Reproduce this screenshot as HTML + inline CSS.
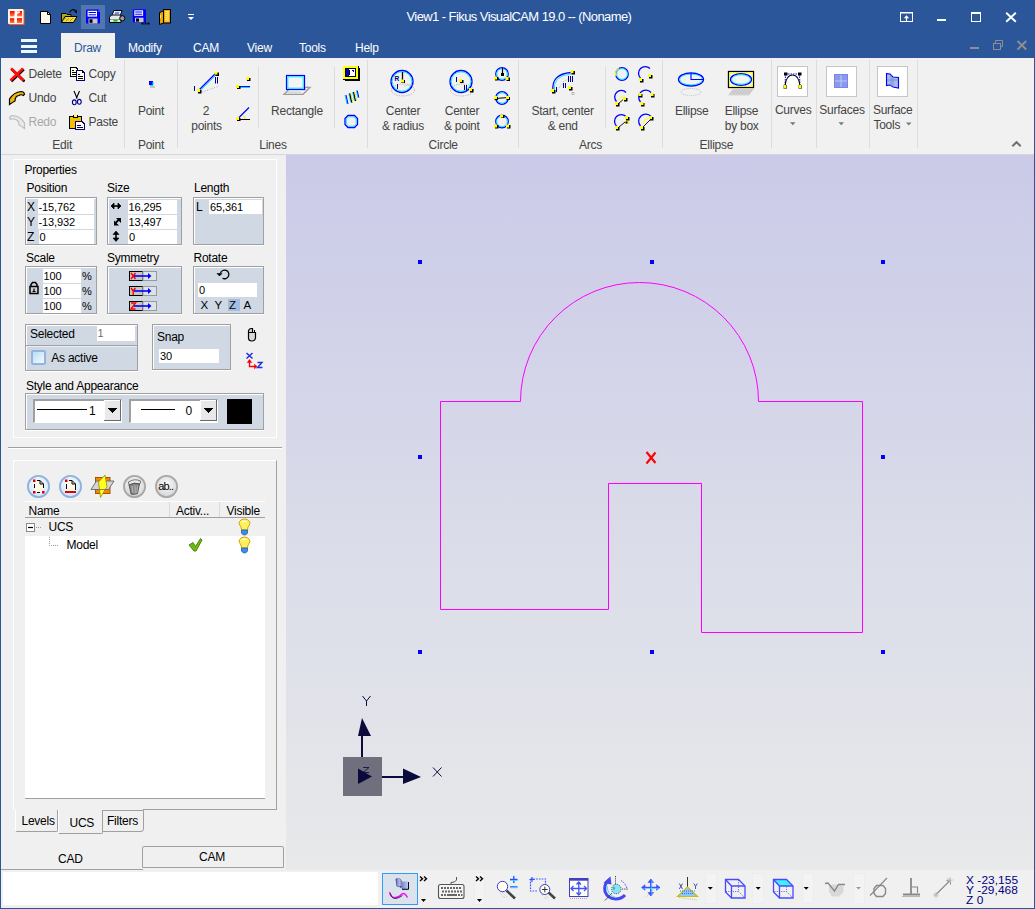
<!DOCTYPE html>
<html><head><meta charset="utf-8">
<style>
*{box-sizing:border-box;margin:0;padding:0}
html,body{width:1035px;height:909px;overflow:hidden;background:#f0f0f0;font-family:"Liberation Sans",sans-serif;font-size:12px;color:#222}
.a{position:absolute}
.t{position:absolute;white-space:nowrap;letter-spacing:-0.25px;line-height:14px}
#title{left:0;top:0;width:1035px;height:58px;background:#2b579a}
#ribbon{left:1px;top:58px;width:1033px;height:97px;background:#f1f1f1;border-bottom:1px solid #d6d6d6}
.rt{color:#444}
.sep{position:absolute;width:1px;background:#dcdcdc}
#left{left:1px;top:155px;width:285px;height:715px;background:#f0f0f0}
#vp{left:286px;top:155px;width:748px;height:715px;background:linear-gradient(#cacae8 0%,#d9dbe9 50%,#e8e9ea 100%)}
#status{left:1px;top:870px;width:1033px;height:38px;background:#f0f0f0}
.box{position:absolute;border:1px solid #a5a5a5;background:#cfd8e2}
.inp{position:absolute;background:#fff}
.nt{position:absolute;white-space:nowrap;font-size:11px;line-height:13px;color:#000;letter-spacing:-0.1px}
</style></head><body>
<!-- window borders -->
<div class="a" style="left:0;top:0;width:1035px;height:909px;background:#2b579a"></div>
<div id="title" class="a"></div>
<div id="ribbon" class="a"></div>
<div id="left" class="a"></div>
<div id="vp" class="a"></div>
<div id="status" class="a"></div>

<!-- TITLE -->
<div class="t" style="left:406.5px;top:9.7px;color:#fff;font-size:13px;letter-spacing:-0.58px">View1 - Fikus VisualCAM 19.0 -- (Noname)</div>


<!-- QAT icons -->
<svg class="a" style="left:0;top:0" width="240" height="32">
 <defs><linearGradient id="lg_f" x1="0" y1="0" x2="0" y2="1"><stop offset="0" stop-color="#ff0000"/><stop offset="1" stop-color="#ff7a48"/></linearGradient></defs>
 <rect x="9" y="10" width="15.5" height="15" fill="#ff5a30"/>
 <rect x="8" y="9" width="15.5" height="15" rx="1" fill="#fff6e0"/>
 <rect x="10" y="11" width="4.6" height="5.3" fill="url(#lg_f)"/>
 <rect x="17.2" y="11" width="4.8" height="5.3" fill="url(#lg_f)"/>
 <rect x="10" y="18.2" width="4.5" height="4.8" fill="url(#lg_f)"/>
 <rect x="17" y="18.2" width="5" height="4.8" fill="url(#lg_f)"/>
 <path d="M15.6 22 V15.5 Q15.8 12.5 19.8 12" stroke="#fff" stroke-width="2.2" fill="none"/>
 <path d="M40.5 11.5 H47.5 L50.5 14.5 V23.5 H40.5 Z" fill="#fffde8" stroke="#000" stroke-width="1"/>
 <path d="M47.5 11.5 V14.5 H50.5" fill="none" stroke="#000" stroke-width="1"/>
 <path d="M61.5 22.5 V13.5 H66 L67 14.5 H71 V22.5 Z" fill="#b8a820" stroke="#000" stroke-width="1"/>
 <path d="M61.5 22.5 L65 16.5 H77 L73.5 22.5 Z" fill="#f0d838" stroke="#000" stroke-width="1"/>
 <path d="M63 20 L66 18 M66 21 L69 18.5 M70 21 L73 18" stroke="#7a7000" stroke-width="0.7"/>
 <path d="M69.5 12.5 Q72 8 75.5 10.5" fill="none" stroke="#000" stroke-width="1.1"/><path d="M74 11.5 L77 13.5 L77 10 Z" fill="#000"/>
 <rect x="81" y="5" width="24" height="24" fill="#5176b0"/>
 <rect x="86" y="9.6" width="14" height="14" rx="1.2" fill="#0000ff"/>
 <rect x="87.6" y="10.8" width="9.4" height="5.8" fill="#fff"/><rect x="88.5" y="12" width="7.5" height="1" fill="#0000ff"/><rect x="88.5" y="14.3" width="7.5" height="1" fill="#0000ff"/>
 <rect x="88.5" y="18.5" width="9" height="5" fill="#c8c8c8"/><rect x="89.5" y="19.3" width="3" height="3.5" fill="#000"/>
 <rect x="98.5" y="10.5" width="1" height="1" fill="#fff"/>
 <path d="M112 15 L114 10.5 H122 L120.5 15" fill="#fff" stroke="#000" stroke-width="1"/>
 <path d="M115 12.3 H119.5 M114.5 13.6 H119" stroke="#2060ff" stroke-width="0.8"/>
 <path d="M109.5 17.5 L111 15 H121 V22.5 H109.5 Z" fill="#e8e8e8" stroke="#000" stroke-width="1"/>
 <path d="M110 19.5 H121" stroke="#888" stroke-width="0.8"/>
 <rect x="113.5" y="19.8" width="4" height="1.8" fill="#00d000"/>
 <circle cx="122.3" cy="18.3" r="2.6" fill="#999" stroke="#000" stroke-width="1"/>
 <rect x="132.8" y="9.2" width="13.2" height="13.2" rx="1.2" fill="#0000ff"/>
 <rect x="134.3" y="10.3" width="8.8" height="5.5" fill="#fff"/><rect x="135.2" y="11.5" width="7" height="1" fill="#0000ff"/><rect x="135.2" y="13.7" width="7" height="1" fill="#0000ff"/>
 <rect x="135" y="17.7" width="8.5" height="4.5" fill="#c8c8c8"/><rect x="136" y="18.5" width="3" height="3.2" fill="#000"/>
 <rect x="141.5" y="22.5" width="2" height="2" fill="#000"/><rect x="144.5" y="22.5" width="2" height="2" fill="#000"/><rect x="147.5" y="22.5" width="2" height="2" fill="#000"/>
 <path d="M159.5 12.5 L163.5 11 V23 L159.5 24.5 Z" fill="#f0a000" stroke="#000" stroke-width="1"/>
 <rect x="163.5" y="9.5" width="7" height="13.5" fill="#f0a000" stroke="#000" stroke-width="1"/>
 <rect x="165" y="11" width="4" height="10.5" fill="#ffe860"/>
 <path d="M166 12 V21 M168 12.5 V21.5" stroke="#c89000" stroke-width="0.7" stroke-dasharray="1 1"/>
 <path d="M160.5 15 V18" stroke="#ffe080" stroke-width="1"/>
 <rect x="188" y="14" width="6" height="1" fill="#fff"/><path d="M188 17 H194 L191 20 Z" fill="#fff"/>
</svg>
<!-- window buttons -->
<svg class="a" style="left:890px;top:0" width="145" height="58">
 <rect x="10.5" y="12.5" width="12" height="9" fill="none" stroke="#fff" stroke-width="1"/>
 <rect x="10" y="12" width="13" height="1.5" fill="#fff"/>
 <path d="M16.5 21 V17" stroke="#fff" stroke-width="1.2"/><path d="M13.8 18.3 L16.5 15.3 L19.2 18.3 Z" fill="#fff"/>
 <rect x="47" y="19" width="9" height="2" fill="#fff"/>
 <rect x="81.5" y="12.5" width="9" height="9" fill="none" stroke="#fff" stroke-width="1"/><rect x="81" y="12" width="10" height="2" fill="#fff"/>
 <path d="M116.2 12.8 L125.8 21.8 M125.8 12.8 L116.2 21.8" stroke="#fff" stroke-width="1.9"/>
 <rect x="80" y="47" width="9" height="2" fill="#8e8f8d"/>
 <rect x="103.5" y="43.5" width="7" height="6" fill="none" stroke="#8e8f8d" stroke-width="1"/>
 <path d="M105.5 43.5 V40.5 H112.5 V46.5 H110.5" fill="none" stroke="#8e8f8d" stroke-width="1"/>
 <path d="M127.5 41 L136.2 49.5 M136.2 41 L127.5 49.5" stroke="#8e8f8d" stroke-width="1.9"/>
</svg>
<!-- hamburger -->
<div class="a" style="left:21px;top:39px;width:16px;height:3px;background:#eafaff"></div>
<div class="a" style="left:21px;top:45px;width:16px;height:3px;background:#eafaff"></div>
<div class="a" style="left:21px;top:50px;width:16px;height:3px;background:#eafaff"></div>

<!-- RIBBON CONTENT -->
<div class="sep" style="left:124px;top:60px;height:88px"></div>
<div class="sep" style="left:177px;top:60px;height:88px"></div>
<div class="sep" style="left:367px;top:60px;height:88px"></div>
<div class="sep" style="left:518px;top:60px;height:88px"></div>
<div class="sep" style="left:662px;top:60px;height:88px"></div>
<div class="sep" style="left:771px;top:60px;height:88px"></div>
<div class="sep" style="left:816px;top:60px;height:88px"></div>
<div class="sep" style="left:869px;top:60px;height:88px"></div>
<div class="sep" style="left:917px;top:60px;height:88px"></div>
<div class="sep" style="left:258px;top:67px;height:61px"></div>
<div class="sep" style="left:334px;top:67px;height:61px"></div>
<div class="sep" style="left:605px;top:67px;height:61px"></div>
<div class="t" style="left:28.5px;top:67px;color:#444;">Delete</div>
<div class="t" style="left:88.5px;top:67px;color:#444;">Copy</div>
<div class="t" style="left:28.5px;top:90.5px;color:#444;">Undo</div>
<div class="t" style="left:88.5px;top:90.5px;color:#444;">Cut</div>
<div class="t" style="left:28.5px;top:115px;color:#a8a8a8;">Redo</div>
<div class="t" style="left:88.5px;top:115px;color:#444;">Paste</div>
<div class="t" style="left:91px;width:120px;text-align:center;top:104px;color:#444;">Point</div>
<div class="t" style="left:146px;width:120px;text-align:center;top:104px;color:#444;">2</div>
<div class="t" style="left:237px;width:120px;text-align:center;top:104px;color:#444;">Rectangle</div>
<div class="t" style="left:343px;width:120px;text-align:center;top:104px;color:#444;">Center</div>
<div class="t" style="left:402px;width:120px;text-align:center;top:104px;color:#444;">Center</div>
<div class="t" style="left:502.6px;width:120px;text-align:center;top:104px;color:#444;">Start, center</div>
<div class="t" style="left:631.7px;width:120px;text-align:center;top:104px;color:#444;">Ellipse</div>
<div class="t" style="left:681.5px;width:120px;text-align:center;top:104px;color:#444;">Ellipse</div>
<div class="t" style="left:146.5px;width:120px;text-align:center;top:119px;color:#444;">points</div>
<div class="t" style="left:343px;width:120px;text-align:center;top:119px;color:#444;">&amp; radius</div>
<div class="t" style="left:401.8px;width:120px;text-align:center;top:119px;color:#444;">&amp; point</div>
<div class="t" style="left:502.70000000000005px;width:120px;text-align:center;top:119px;color:#444;">&amp; end</div>
<div class="t" style="left:681.7px;width:120px;text-align:center;top:119px;color:#444;">by box</div>
<div class="t" style="left:2.200000000000003px;width:120px;text-align:center;top:137.5px;color:#444;">Edit</div>
<div class="t" style="left:91px;width:120px;text-align:center;top:137.5px;color:#444;">Point</div>
<div class="t" style="left:213px;width:120px;text-align:center;top:137.5px;color:#444;">Lines</div>
<div class="t" style="left:383.2px;width:120px;text-align:center;top:137.5px;color:#444;">Circle</div>
<div class="t" style="left:530.5px;width:120px;text-align:center;top:137.5px;color:#444;">Arcs</div>
<div class="t" style="left:656.4px;width:120px;text-align:center;top:137.5px;color:#444;">Ellipse</div>
<div class="t" style="left:733.2px;width:120px;text-align:center;top:102.7px;color:#444;">Curves</div>
<div class="t" style="left:782px;width:120px;text-align:center;top:102.7px;color:#444;">Surfaces</div>
<div class="t" style="left:832.7px;width:120px;text-align:center;top:102.7px;color:#444;">Surface</div>
<div class="t" style="left:873.4px;top:118.2px;color:#444;">Tools</div>
<svg class="a" style="left:0;top:0" width="1035" height="158"><path d="M790 122.2 H795.5 L792.75 125.2 Z" fill="#777"/><path d="M838.5 122.2 H844 L841.25 125.2 Z" fill="#777"/><path d="M906 122.5 H911.5 L908.75 125.5 Z" fill="#777"/><path d="M1012.3 146.3 L1016.5 142.2 L1020.7 146.3" fill="none" stroke="#707070" stroke-width="2"/></svg>
<div class="a" style="left:777px;top:66px;width:31px;height:31px;background:#fff;border:1px solid #c6c6c6"></div>
<div class="a" style="left:826px;top:66px;width:31px;height:31px;background:#fff;border:1px solid #c6c6c6"></div>
<div class="a" style="left:877px;top:66px;width:31px;height:31px;background:#fff;border:1px solid #c6c6c6"></div>
<svg class="a" style="left:0;top:0" width="1035" height="158" shape-rendering="crispEdges">
<g shape-rendering="auto">
 <!-- Delete -->
 <path d="M11 68.5 L23.5 80.5 M23 68.5 L10.5 80.5" stroke="#000" stroke-width="2.6" transform="translate(0.8,0.8)"/>
 <path d="M11 68.5 L23.5 80.5 M23 68.5 L10.5 80.5" stroke="#ff1010" stroke-width="2.6"/>
 <rect x="24" y="80.5" width="1" height="1" fill="#000"/>
 <!-- Undo -->
 <path d="M9.5 104.5 L9.5 99 Q14 92 21 91.5 Q24 91.5 24.5 94 L23.5 95.5 Q21 94 19 95.5 Q15 96 15 101 Q13 102 9.5 104.5 Z" fill="#f0b800" stroke="#000" stroke-width="1.2"/>
 <!-- Redo -->
 <path d="M24.5 128.5 L24.5 123 Q20 116 13 115.5 Q10 115.5 9.5 118 L10.5 119.5 Q13 118 15 119.5 Q19 120 19 125 Q21 126 24.5 128.5 Z" fill="#e8e8e8" stroke="#bdbdbd" stroke-width="1.2"/>
 <!-- Copy -->
 <g shape-rendering="crispEdges">
 <path d="M70 67 H76 L78 69 V77 H70 Z" fill="#000"/><path d="M71 68 H75.5 L77 69.5 V76 H71 Z" fill="#fffce6"/>
 <rect x="72" y="70" width="2" height="1" fill="#000"/><rect x="72" y="72" width="4" height="1" fill="#000"/><rect x="72" y="74" width="4" height="1" fill="#000"/>
 <path d="M76 70 H82 L85 73 V81 H76 Z" fill="#000080"/><path d="M77 71 H81.5 L84 73.5 V80 H77 Z" fill="#fffce6"/>
 <rect x="78" y="74" width="2" height="1" fill="#000"/><rect x="78" y="76" width="5" height="1" fill="#000"/><rect x="78" y="78" width="5" height="1" fill="#000"/>
 <rect x="82" y="71" width="1" height="2" fill="#000"/>
 </g>
 <!-- Cut -->
 <path d="M74 91 L77.2 98.5 M79.5 91 L76.3 98.5" stroke="#000" stroke-width="1.1"/>
 <ellipse cx="74.3" cy="102.3" rx="1.9" ry="2.4" fill="none" stroke="#000090" stroke-width="1.1"/>
 <ellipse cx="79.3" cy="101.8" rx="1.9" ry="2.4" fill="none" stroke="#000090" stroke-width="1.1"/>
 <!-- Paste -->
 <g shape-rendering="crispEdges">
 <rect x="69" y="116" width="13" height="13" fill="#000"/><rect x="70" y="117" width="11" height="11" fill="#f4c000"/>
 <rect x="73" y="115" width="5" height="3" fill="#000"/><rect x="74" y="115" width="3" height="2" fill="#ffff40"/>
 <path d="M75 121 H82 L85 124 V130 H75 Z" fill="#000080"/><path d="M76 122 H81.5 L84 124.5 V129 H76 Z" fill="#fffce6"/>
 <rect x="77" y="125" width="4" height="1" fill="#000080"/><rect x="77" y="127" width="6" height="1" fill="#000080"/>
 </g>
 <!-- Point -->
 <rect x="149" y="81" width="4" height="4" fill="#0000ff"/>
 <path d="M153 82 V85.5 H150" stroke="#00e8ff" stroke-width="1" fill="none"/>
 <path d="M150 87 H155" stroke="#999" stroke-width="1"/>
 <!-- 2 points -->
 <path d="M200 93 L219 86" stroke="#aaa" stroke-width="1" stroke-dasharray="1 1.5"/>
 <path d="M198.5 90.5 L216 73" stroke="#0000ff" stroke-width="1.2"/>
 <path d="M199.5 91.5 L217 74" stroke="#00e0ff" stroke-width="1"/>
 <rect x="198" y="90" width="3.5" height="3.5" fill="#000"/><rect x="197" y="89" width="3" height="3" fill="#ffff00"/>
 <rect x="215.5" y="72.5" width="3.5" height="3.5" fill="#000"/><rect x="214.5" y="71.5" width="3" height="3" fill="#ffff00"/>
 <path d="M194.5 86 V91 M215.5 77 V83.5 M217.5 77 V83.5" stroke="#000090" stroke-width="1"/>
 <!-- small line horiz -->
 <path d="M239 86.5 H250" stroke="#0000ff" stroke-width="1"/><path d="M239 87.5 H250" stroke="#00e0ff" stroke-width="1"/>
 <rect x="237" y="86" width="3.5" height="3" fill="#000"/><rect x="236" y="85" width="3" height="3" fill="#ffff00"/>
 <rect x="247" y="78" width="3.5" height="3" fill="#000"/><rect x="246" y="77" width="3" height="3" fill="#ffff00"/>
 <!-- small angle line -->
 <path d="M239 119.5 H250" stroke="#000" stroke-width="1"/>
 <path d="M238.5 118 L249 107.5" stroke="#0000ff" stroke-width="1.2"/>
 <path d="M243 115.5 Q245 116 245 119" stroke="#ffe000" stroke-width="1" fill="none"/>
 <rect x="237" y="118" width="3.5" height="3" fill="#000"/><rect x="236" y="117" width="3" height="3" fill="#ffff00"/>
 <!-- Rectangle -->
 <path d="M284 94.3 H303 L310 87.3 H291 Z" fill="none" stroke="#9a9a9a" stroke-width="1.3"/>
 <path d="M286 93 V91.5 M288 93 V91.5 M290 93 V91.5 M292 93 V91.5 M294 93 V91.5 M296 93 V91.5 M298 93 V91.5 M300 93 V91.5 M305.5 90 V88.5 M307.5 88 V86" stroke="#b0b0b0" stroke-width="0.8"/>
 <rect x="286.5" y="75.5" width="18" height="14" fill="#f4f4f4" stroke="#0000ff" stroke-width="1.2"/>
 <rect x="287.8" y="76.8" width="15.4" height="11.4" fill="none" stroke="#00e8ff" stroke-width="1"/>
 <!-- small icons col -->
 <g shape-rendering="crispEdges">
 <rect x="345" y="68" width="15" height="13" fill="#000"/>
 <rect x="343" y="66" width="15" height="13" fill="#ffff00"/>
 <rect x="345" y="68" width="11" height="9" fill="#000"/>
 <rect x="346" y="69" width="9" height="7" fill="#fff"/>
 <rect x="346" y="69" width="3" height="7" fill="#0000c0"/><rect x="349" y="70" width="1" height="5" fill="#000"/>
 <rect x="352" y="70" width="2" height="1" fill="#0000c0"/><rect x="353" y="71" width="1" height="1" fill="#0000c0"/>
 <rect x="358" y="66" width="1" height="14" fill="#000"/><rect x="343" y="79" width="16" height="1" fill="#000"/>
 </g>
 <path d="M345 95 L347 104 M348.8 93.5 L350.8 102.5 M352.6 92 L354.6 101 M356.4 90.5 L358 98" stroke="#00e0ff" stroke-width="1"/>
 <path d="M346 95 L348 104 M349.8 93.5 L351.8 102.5 M353.6 92 L355.6 101 M357.2 90.5 L358.8 97.5" stroke="#0000ff" stroke-width="1"/>
 <path d="M349.8 93.5 L351.8 102.5 M353.6 92 L355.6 101" stroke="#000" stroke-width="1"/>
 <path d="M350.8 93.5 L352.8 102.5 M354.6 92 L356.6 101" stroke="#ffe000" stroke-width="1"/>
 <path d="M348 115.5 H354.5 L357.5 118.5 V124.5 L354.5 127.5 H348 L345 124.5 V118.5 Z" fill="none" stroke="#0000ff" stroke-width="1.3"/>
 <path d="M348.5 116.8 H354 L356.2 119 V124 L354 126.2 H348.5 L346.3 124 V119 Z" fill="none" stroke="#00e8ff" stroke-width="0.9"/>
 <!-- Circle center radius -->
 <ellipse cx="403" cy="90" rx="11.5" ry="6" fill="none" stroke="#b0b0b0" stroke-width="1" stroke-dasharray="1.2 1.2"/>
 <circle cx="402" cy="81.5" r="11" fill="none" stroke="#0000ff" stroke-width="1.3"/>
 <circle cx="402" cy="81.5" r="9.8" fill="none" stroke="#00e8ff" stroke-width="1"/>
 <path d="M402.5 72 V82" stroke="#000" stroke-width="1.3"/>
 <rect x="401" y="80" width="4" height="3" fill="#000"/><rect x="401" y="79.5" width="3" height="3" fill="#ffff00"/>
 <text x="394.5" y="81" font-family="Liberation Sans" font-size="6.5" font-weight="bold" fill="#000080">R</text>
 <path d="M397.5 84 V89" stroke="#000090" stroke-width="1"/>
 <path d="M404 86 Q408 84 413 86" stroke="#aaa" stroke-width="0.8" fill="none" stroke-dasharray="1 1"/>
 <!-- Circle center point -->
 <ellipse cx="462" cy="90" rx="11.5" ry="6" fill="none" stroke="#b0b0b0" stroke-width="1" stroke-dasharray="1.2 1.2"/>
 <circle cx="461" cy="81.5" r="11" fill="none" stroke="#0000ff" stroke-width="1.3"/>
 <circle cx="461" cy="81.5" r="9.8" fill="none" stroke="#00e8ff" stroke-width="1"/>
 <path d="M456.5 77 V82 M464.5 85 V90 M466.5 85 V90" stroke="#000090" stroke-width="1"/>
 <rect x="460" y="80" width="3.5" height="3" fill="#000"/><rect x="459" y="79" width="3" height="3" fill="#ffff00"/>
 <rect x="470" y="89" width="3.5" height="3.5" fill="#000"/><rect x="469" y="88" width="3" height="3" fill="#ffff00"/>
 <!-- small circles -->
 <circle cx="502" cy="74" r="6.3" fill="none" stroke="#0000ff" stroke-width="1.2"/><circle cx="502" cy="74" r="5.2" fill="none" stroke="#00e8ff" stroke-width="0.9"/>
 <path d="M502.5 68 V74" stroke="#000" stroke-width="1.2"/><rect x="501" y="73" width="3" height="3" fill="#000"/>
 <rect x="495" y="77" width="3.5" height="3.5" fill="#000"/><rect x="494" y="76.5" width="3" height="3" fill="#ffff00"/>
 <rect x="506.5" y="77.5" width="3.5" height="3.5" fill="#000"/><rect x="505.5" y="77" width="3" height="3" fill="#ffff00"/>
 <circle cx="502" cy="98" r="6.3" fill="none" stroke="#0000ff" stroke-width="1.2"/><circle cx="502" cy="98" r="5.2" fill="none" stroke="#00e8ff" stroke-width="0.9"/>
 <path d="M496 98.5 L508 97.5" stroke="#000" stroke-width="1.2"/>
 <rect x="494.5" y="97" width="3.5" height="3" fill="#000"/><rect x="494" y="96" width="3" height="3" fill="#ffff00"/>
 <rect x="506.5" y="97" width="3.5" height="3" fill="#000"/><rect x="506" y="96" width="3" height="3" fill="#ffff00"/>
 <circle cx="502" cy="121.5" r="6.3" fill="none" stroke="#0000ff" stroke-width="1.2"/><circle cx="502" cy="121.5" r="5.2" fill="none" stroke="#00e8ff" stroke-width="0.9"/>
 <rect x="501" y="115" width="3.5" height="3" fill="#000"/><rect x="500" y="114.5" width="3" height="3" fill="#ffff00"/>
 <rect x="495" y="125" width="3.5" height="3.5" fill="#000"/><rect x="494" y="124.5" width="3" height="3" fill="#ffff00"/>
 <rect x="507" y="125" width="3.5" height="3.5" fill="#000"/><rect x="506" y="124.5" width="3" height="3" fill="#ffff00"/>
 <!-- Arc start center end -->
 <path d="M553 93 Q556 92 558 89 M559 88 L563 83 M563 82 L568 79" stroke="#aaa" stroke-width="0.8" stroke-dasharray="1 1" fill="none"/>
 <path d="M553 91 Q551 74 571 72.5" stroke="#0000ff" stroke-width="1.3" fill="none"/>
 <path d="M554.3 91 Q552.5 75.5 571 74" stroke="#00e8ff" stroke-width="0.9" fill="none"/>
 <path d="M556.5 87 V92 M563.5 83 V88 M565.5 83 V88 M568.5 76 V82 M570.5 76 V82 M572.5 76 V82" stroke="#000090" stroke-width="1"/>
 <rect x="552" y="90" width="3.5" height="3.5" fill="#000"/><rect x="551" y="89" width="3" height="3" fill="#ffff00"/>
 <rect x="571.5" y="71" width="3.5" height="3.5" fill="#000"/><rect x="570.5" y="70" width="3" height="3" fill="#ffff00"/>
 <rect x="569" y="87" width="3.5" height="3.5" fill="#000"/><rect x="568" y="86" width="3" height="3" fill="#ffff00"/>
 <rect x="572" y="92.5" width="2" height="2" fill="none" stroke="#aaa" stroke-width="0.7"/>
 <!-- small arcs -->
 <circle cx="622" cy="74" r="6.3" fill="none" stroke="#0000ff" stroke-width="1.2"/><circle cx="622" cy="74" r="5.4" fill="none" stroke="#00e8ff" stroke-width="0.9"/>
 <path d="M616 76 A6 6 0 0 1 619 68.5" stroke="#ffff00" stroke-width="1.2" fill="none"/>
 <path d="M640.5 78 A6.2 6.2 0 0 1 650 68.5" stroke="#0000ff" stroke-width="1.3" fill="none"/>
 <rect x="640" y="79" width="3.5" height="3.5" fill="#000"/><rect x="639" y="78" width="3" height="3" fill="#ffff00"/>
 <rect x="649" y="75" width="3.5" height="3.5" fill="#000"/><rect x="648" y="74" width="3" height="3" fill="#ffff00"/>
 <path d="M616.5 101.5 A6.2 6.2 0 0 1 626 92.5" stroke="#0000ff" stroke-width="1.3" fill="none"/>
 <path d="M620 101 A3.5 3.5 0 0 1 623 96" stroke="#ffff00" stroke-width="0.9" fill="none"/>
 <path d="M618 104 L625 98" stroke="#000" stroke-width="0.9"/>
 <rect x="616" y="103" width="3.5" height="3.5" fill="#000"/><rect x="615" y="102" width="3" height="3" fill="#ffff00"/>
 <rect x="624" y="98" width="3.5" height="3.5" fill="#000"/><rect x="623" y="97" width="3" height="3" fill="#ffff00"/>
 <path d="M640.5 102 A6.2 6.2 0 0 1 651 92.5" stroke="#0000ff" stroke-width="1.3" fill="none"/>
 <rect x="639" y="94" width="3.5" height="3.5" fill="#000"/><rect x="638.5" y="93" width="3" height="3" fill="#ffff00"/>
 <rect x="651" y="94" width="3.5" height="3.5" fill="#000"/><rect x="650.5" y="93" width="3" height="3" fill="#ffff00"/>
 <rect x="641" y="103" width="3.5" height="3.5" fill="#000"/><rect x="640.5" y="102" width="3" height="3" fill="#ffff00"/>
 <path d="M616.5 126 A6.2 6.2 0 0 1 626 116.5" stroke="#0000ff" stroke-width="1.3" fill="none"/>
 <path d="M619 127 L625 122" stroke="#000" stroke-width="0.9"/>
 <rect x="616" y="127" width="3.5" height="3.5" fill="#000"/><rect x="615" y="126" width="3" height="3" fill="#ffff00"/>
 <rect x="626" y="117" width="3.5" height="3.5" fill="#000"/><rect x="625" y="116" width="3" height="3" fill="#ffff00"/>
 <rect x="625" y="121" width="4" height="3" fill="#ffff00"/><rect x="625.5" y="121.5" width="2" height="2" fill="#000"/>
 <path d="M640.5 126 A6.2 6.2 0 0 1 651 116.5" stroke="#0000ff" stroke-width="1.3" fill="none"/>
 <path d="M643 127 L652 118" stroke="#000" stroke-width="0.9"/>
 <path d="M644 124 A4 4 0 0 1 648 119" stroke="#ffff00" stroke-width="0.9" fill="none"/>
 <rect x="641" y="127" width="3.5" height="3.5" fill="#000"/><rect x="640" y="126" width="3" height="3" fill="#ffff00"/>
 <rect x="650" y="117" width="3.5" height="3.5" fill="#000"/><rect x="649" y="116" width="3" height="3" fill="#ffff00"/>
 <!-- Ellipse -->
 <ellipse cx="691" cy="92" rx="10" ry="3.5" fill="none" stroke="#b8b8b8" stroke-width="0.9" stroke-dasharray="1 1"/>
 <ellipse cx="691" cy="79.5" rx="12.5" ry="6.5" fill="#f2f2f2" stroke="#0000ff" stroke-width="1.3"/>
 <ellipse cx="691" cy="79.5" rx="11.3" ry="5.4" fill="none" stroke="#00e8ff" stroke-width="0.9"/>
 <path d="M691 73 V79.5 H703" stroke="#0000ff" stroke-width="1.1" fill="none"/>
 <!-- Ellipse by box -->
 <path d="M728 95.5 L733 89 H754 L749 95.5 Z" fill="#d6d6d6"/>
 <path d="M729.5 94.5 L734 89.5 M732.5 94.5 L737 89.5 M735.5 94.5 L740 89.5 M738.5 94.5 L743 89.5 M741.5 94.5 L746 89.5 M744.5 94.5 L749 89.5 M747.5 94.5 L752 89.5" stroke="#b4b4b4" stroke-width="0.8"/>
 <rect x="728.5" y="71.5" width="25" height="16" fill="#f4f4f4" stroke="#000" stroke-width="1.3"/>
 <rect x="729.7" y="72.7" width="22.6" height="13.6" fill="none" stroke="#ffff00" stroke-width="1.1"/>
 <ellipse cx="741" cy="79.5" rx="10.5" ry="5.8" fill="none" stroke="#0000ff" stroke-width="1.3"/>
 <ellipse cx="741" cy="79.5" rx="9.4" ry="4.7" fill="none" stroke="#00e8ff" stroke-width="0.9"/>
 <!-- Curves -->
 <path d="M785.5 74 H799.5 M785.5 74 L785 86 M799.5 74 L800 86" stroke="#0000ff" stroke-width="1" stroke-dasharray="1.5 1"/>
 <path d="M785 86 Q786 75 792.5 75 Q799 75 800 86" stroke="#000" stroke-width="1.1" fill="none"/>
 <rect x="784" y="72.5" width="3.5" height="3" fill="#000"/><rect x="798" y="72.5" width="3.5" height="3" fill="#000"/>
 <rect x="783.5" y="85" width="3.5" height="3.5" fill="#000"/><rect x="783.5" y="85" width="3" height="3" fill="#ffff00"/>
 <rect x="798.5" y="85" width="3.5" height="3.5" fill="#000"/><rect x="798.5" y="85" width="3" height="3" fill="#ffff00"/>
 <!-- Surfaces -->
 <rect x="834" y="74" width="14" height="14" fill="#8899ee"/>
 <path d="M841 74 V88 M834 81 H848" stroke="#c0caf4" stroke-width="1"/>
 <rect x="834.5" y="74.5" width="13" height="13" fill="none" stroke="#7788e8" stroke-width="1"/>
 <!-- Surface tools -->
 <path d="M886.5 73.5 L890 74 L893 77 L898.5 77.5 V88 L893 87 L890 85 L886.5 85.5 Z" fill="#a8b8e8" stroke="#0000ff" stroke-width="1.1"/>
 <path d="M891 75 V86 M893 77 V87 M887 80 H898" stroke="#7088d8" stroke-width="0.8"/>
</g>
</svg>
<!-- LEFT PANEL -->
<div class="a" style="left:13px;top:159px;width:264px;height:279px;border:1px solid #fff"></div>
<div class="t" style="left:24.5px;top:163px;color:#000;">Properties</div>
<div class="t" style="left:26.5px;top:181px;color:#000;">Position</div>
<div class="t" style="left:107px;top:181px;color:#000;">Size</div>
<div class="t" style="left:194px;top:181px;color:#000;">Length</div>
<div class="a" style="left:25px;top:197px;width:72px;height:48px;border:1px solid #a0a0a0;background:#cfd8e3;box-shadow:inset 1px 1px 0 #fff,0 1px 0 #fff"></div>
<div class="a" style="left:38px;top:199px;width:56px;height:15px;background:#fff"></div>
<div class="a" style="left:38px;top:215px;width:56px;height:14px;background:#fff"></div>
<div class="a" style="left:39px;top:230px;width:55px;height:14px;background:#fff"></div>
<div class="t" style="left:27px;top:200px;color:#000;font-size:12px">X</div>
<div class="t" style="left:27px;top:215px;color:#000;">Y</div>
<div class="t" style="left:27px;top:230px;color:#000;">Z</div>
<div class="nt" style="left:38.5px;top:200.5px;color:#000;">-15,762</div>
<div class="nt" style="left:38.5px;top:215.5px;color:#000;">-13,932</div>
<div class="nt" style="left:39.5px;top:230.5px;color:#000;">0</div>
<div class="a" style="left:107px;top:197px;width:75px;height:48px;border:1px solid #a0a0a0;background:#cfd8e3;box-shadow:inset 1px 1px 0 #fff,0 1px 0 #fff"></div>
<div class="a" style="left:128px;top:200px;width:49px;height:14px;background:#fff"></div>
<div class="a" style="left:128px;top:215px;width:49px;height:14px;background:#fff"></div>
<div class="a" style="left:128px;top:230px;width:49px;height:14px;background:#fff"></div>
<div class="nt" style="left:128.5px;top:200.5px;color:#000;">16,295</div>
<div class="nt" style="left:128.5px;top:215.5px;color:#000;">13,497</div>
<div class="nt" style="left:129px;top:230.5px;color:#000;">0</div>
<div class="a" style="left:193px;top:197px;width:71px;height:48px;border:1px solid #a0a0a0;background:#cfd8e3;box-shadow:inset 1px 1px 0 #fff,0 1px 0 #fff"></div>
<div class="a" style="left:209px;top:200px;width:53px;height:14px;background:#fff"></div>
<div class="t" style="left:196px;top:200px;color:#000;">L</div>
<div class="nt" style="left:210px;top:200.5px;color:#000;">65,361</div>
<div class="t" style="left:26px;top:251px;color:#000;">Scale</div>
<div class="t" style="left:107px;top:251px;color:#000;">Symmetry</div>
<div class="t" style="left:193.5px;top:251px;color:#000;">Rotate</div>
<div class="a" style="left:25px;top:266px;width:72px;height:48px;border:1px solid #a0a0a0;background:#cfd8e3;box-shadow:inset 1px 1px 0 #fff,0 1px 0 #fff"></div>
<div class="a" style="left:43px;top:269px;width:38px;height:14px;background:#fff"></div>
<div class="a" style="left:43px;top:284px;width:38px;height:14px;background:#fff"></div>
<div class="a" style="left:43px;top:299px;width:38px;height:14px;background:#fff"></div>
<div class="nt" style="left:43.5px;top:269.5px;color:#000;">100</div>
<div class="nt" style="left:43.5px;top:284.5px;color:#000;">100</div>
<div class="nt" style="left:43.5px;top:299.5px;color:#000;">100</div>
<div class="nt" style="left:82px;top:269.5px;color:#000;">%</div>
<div class="nt" style="left:82px;top:284.5px;color:#000;">%</div>
<div class="nt" style="left:82px;top:299.5px;color:#000;">%</div>
<div class="a" style="left:107px;top:266px;width:75px;height:48px;border:1px solid #a0a0a0;background:#cfd8e3;box-shadow:inset 1px 1px 0 #fff,0 1px 0 #fff"></div>
<div class="a" style="left:193px;top:266px;width:71px;height:48px;border:1px solid #a0a0a0;background:#cfd8e3;box-shadow:inset 1px 1px 0 #fff,0 1px 0 #fff"></div>
<div class="a" style="left:198px;top:283px;width:59px;height:14px;background:#fff"></div>
<div class="nt" style="left:199px;top:284px;color:#000;">0</div>
<div class="nt" style="left:200.5px;top:298.5px;color:#000;font-size:11.5px">X</div>
<div class="nt" style="left:214.5px;top:298.5px;color:#000;font-size:11.5px">Y</div>
<div class="a" style="left:228px;top:299px;width:12px;height:12px;background:#a4bde0"></div>
<div class="nt" style="left:229px;top:298.5px;color:#000;font-size:11.5px">Z</div>
<div class="nt" style="left:243.5px;top:298.5px;color:#000;font-size:11.5px">A</div>
<div class="a" style="left:25px;top:324px;width:113px;height:47px;border:1px solid #a0a0a0;background:#cfd8e3;box-shadow:inset 1px 1px 0 #fff,0 1px 0 #fff"></div>
<div class="a" style="left:26px;top:345px;width:111px;height:1px;background:#a0a0a0"></div>
<div class="a" style="left:26px;top:346px;width:111px;height:1px;background:#e8eef4"></div>
<div class="t" style="left:30px;top:327px;color:#000;">Selected</div>
<div class="a" style="left:97px;top:326px;width:38px;height:15px;background:#fff"></div>
<div class="nt" style="left:97.5px;top:327px;color:#6d6d6d;">1</div>
<div class="a" style="left:31px;top:350px;width:15px;height:15px;border:2px solid #93b4df;border-radius:2px;background:linear-gradient(135deg,#b8dcf8,#f6fbff)"></div>
<div class="t" style="left:51.3px;top:350.5px;color:#000;">As active</div>
<div class="a" style="left:152px;top:324px;width:79px;height:46px;border:1px solid #a0a0a0;background:#cfd8e3;box-shadow:inset 1px 1px 0 #fff,0 1px 0 #fff"></div>
<div class="t" style="left:157px;top:330px;color:#000;">Snap</div>
<div class="a" style="left:159px;top:349px;width:60px;height:14px;background:#fff"></div>
<div class="nt" style="left:160px;top:349.5px;color:#000;">30</div>
<div class="t" style="left:26px;top:378.5px;color:#000;">Style and Appearance</div>
<div class="a" style="left:25px;top:393px;width:239px;height:37px;border:1px solid #a0a0a0;background:#cfd8e3;box-shadow:inset 1px 1px 0 #fff,0 1px 0 #fff"></div>
<div class="a" style="left:33px;top:399px;width:89px;height:24px;background:#fff;border-top:2px solid #a0a0a0;border-left:2px solid #a0a0a0;border-bottom:1px solid #fff;border-right:1px solid #fff"></div>
<div class="a" style="left:129px;top:399px;width:89px;height:24px;background:#fff;border-top:2px solid #a0a0a0;border-left:2px solid #a0a0a0;border-bottom:1px solid #fff;border-right:1px solid #fff"></div>
<svg class="a" style="left:0;top:390px" width="290" height="45" shape-rendering="crispEdges"><rect x="37" y="19" width="50" height="1" fill="#000"/><rect x="141" y="19" width="34" height="1" fill="#000"/><rect x="104" y="10" width="17" height="21" fill="#e8e8e8"/><rect x="104" y="30" width="17" height="1" fill="#6a6a6a"/><rect x="120" y="10" width="1" height="21" fill="#6a6a6a"/><rect x="104" y="10" width="1" height="20" fill="#fff"/><rect x="104" y="10" width="16" height="1" fill="#fff"/><path d="M108 18 H117 L112.5 23 Z" fill="#000"/><rect x="200" y="10" width="17" height="21" fill="#e8e8e8"/><rect x="200" y="30" width="17" height="1" fill="#6a6a6a"/><rect x="216" y="10" width="1" height="21" fill="#6a6a6a"/><rect x="200" y="10" width="1" height="20" fill="#fff"/><rect x="200" y="10" width="16" height="1" fill="#fff"/><path d="M204 18 H213 L208.5 23 Z" fill="#000"/></svg>
<div class="nt" style="left:89px;top:404.5px;color:#000;font-size:12px">1</div>
<div class="nt" style="left:185.5px;top:404.5px;color:#000;font-size:12px">0</div>
<div class="a" style="left:227px;top:399px;width:25px;height:25px;background:#000"></div>
<div class="a" style="left:8px;top:447px;width:274px;height:1px;background:#a0a0a0"></div>
<div class="a" style="left:8px;top:448px;width:274px;height:1px;background:#fff"></div>
<div class="a" style="left:13px;top:460px;width:264px;height:350px;border-top:1px solid #fff;border-left:1px solid #fff;border-right:1px solid #a0a0a0"></div>
<div class="a" style="left:25px;top:501px;width:240px;height:17px;background:#f0f0f0;border-top:1px solid #fff;border-bottom:1px solid #a0a0a0"></div>
<div class="a" style="left:169px;top:502px;width:1px;height:15px;background:#dadada"></div>
<div class="a" style="left:219px;top:502px;width:1px;height:15px;background:#dadada"></div>
<div class="t" style="left:28.5px;top:504px;color:#000;">Name</div>
<div class="t" style="left:176px;top:504px;color:#000;">Activ...</div>
<div class="t" style="left:226.5px;top:504px;color:#000;">Visible</div>
<div class="a" style="left:25px;top:536px;width:240px;height:263px;background:#fff;border-bottom:1px solid #a0a0a0"></div>
<div class="t" style="left:48.5px;top:519.5px;color:#000;">UCS</div>
<div class="t" style="left:66.5px;top:538px;color:#000;">Model</div>
<div class="a" style="left:15px;top:810px;width:43px;height:22px;border-left:1px solid #fff;border-bottom:1px solid #a0a0a0;border-right:1px solid #a0a0a0;border-bottom-left-radius:2px;border-bottom-right-radius:2px"></div>
<div class="a" style="left:58px;top:810px;width:45px;height:24px;border-bottom:1px solid #a0a0a0;border-left:1px solid #fff;border-right:1px solid #a0a0a0;border-bottom-right-radius:2px"></div>
<div class="a" style="left:102px;top:810px;width:42px;height:22px;border-left:1px solid #a0a0a0;border-bottom:1px solid #a0a0a0;border-right:1px solid #a0a0a0;border-top:1px solid #a0a0a0;border-bottom-right-radius:3px"></div>
<div class="t" style="left:21.5px;top:814px;color:#000;">Levels</div>
<div class="t" style="left:69.5px;top:816px;color:#000;">UCS</div>
<div class="t" style="left:107px;top:814px;color:#000;">Filters</div>
<div class="a" style="left:1px;top:868px;width:142px;height:2px;border-bottom:1px solid #a0a0a0"></div>
<div class="a" style="left:142px;top:846px;width:142px;height:22px;border:1px solid #a0a0a0;border-top-left-radius:2px;border-top-right-radius:2px;background:#f0f0f0"></div>
<div class="t" style="left:58px;top:851.5px;color:#000;">CAD</div>
<div class="t" style="left:199px;top:850px;color:#000;">CAM</div>
<svg class="a" style="left:0;top:190px" width="290" height="190" shape-rendering="auto">
 <!-- size arrows -->
 <g transform="translate(0,-190)">
 <path d="M112 206 H120" stroke="#000" stroke-width="1.6"/>
 <path d="M111 206 L114 203 V209 Z M121 206 L118 203 V209 Z" fill="#000" stroke="#000" stroke-width="0.8"/>
 <path d="M115.5 223 L119.5 219" stroke="#000" stroke-width="1.8"/>
 <path d="M114 225.5 V220.5 L119 225.5 Z M121 218 V223 L116 218 Z" fill="#000"/>
 <path d="M116 233 V239" stroke="#000" stroke-width="1.6"/>
 <path d="M116 231 L113 234.5 H119 Z M116 241.5 L113 238 H119 Z" fill="#000" stroke="#000" stroke-width="0.6"/>
 <!-- lock -->
 <path d="M31 286.5 V284.5 L32.5 282.5 H35.5 L37 284.5 V286.5" fill="none" stroke="#000" stroke-width="1.5"/>
 <rect x="30" y="286.5" width="8" height="7" fill="#d0d0d0" stroke="#000" stroke-width="1.5"/>
 <path d="M34 288.5 V291.5 M32.5 291.5 H35.5" stroke="#000" stroke-width="1.2"/>
 <!-- symmetry -->
 <g>
 <rect x="129.5" y="271.5" width="13.5" height="9" fill="#c8c8c0" stroke="#000" stroke-width="1"/>
 <rect x="143" y="271.5" width="13.5" height="9" fill="#dde2e8" stroke="#999" stroke-width="1"/>
 <path d="M131 273 L135.5 279 M135.5 273 L131 279" stroke="#ff0000" stroke-width="1.4"/>
 <path d="M134 276 H149" stroke="#0000ff" stroke-width="1.6"/><path d="M148 273 L151.5 276 L148 279 Z" fill="#0000ff"/>
 <rect x="129.5" y="286.5" width="13.5" height="9" fill="#c8c8c0" stroke="#000" stroke-width="1"/>
 <rect x="143" y="286.5" width="13.5" height="9" fill="#dde2e8" stroke="#999" stroke-width="1"/>
 <path d="M131 288 L133.2 291 L135.5 288 M133.2 291 V295" stroke="#ff0000" stroke-width="1.4" fill="none"/>
 <path d="M134 291 H149" stroke="#0000ff" stroke-width="1.6"/><path d="M148 288 L151.5 291 L148 294 Z" fill="#0000ff"/>
 <rect x="129.5" y="301.5" width="13.5" height="9" fill="#c8c8c0" stroke="#000" stroke-width="1"/>
 <rect x="143" y="301.5" width="13.5" height="9" fill="#dde2e8" stroke="#999" stroke-width="1"/>
 <path d="M131 303 H135.5 L131 309 H135.5" stroke="#ff0000" stroke-width="1.4" fill="none"/>
 <path d="M134 306 H149" stroke="#0000ff" stroke-width="1.6"/><path d="M148 303 L151.5 306 L148 309 Z" fill="#0000ff"/>
 </g>
 <!-- rotate -->
 <path d="M220.5 273 A4.3 4.3 0 1 1 222.5 278.2" fill="none" stroke="#000" stroke-width="1.3"/>
 <path d="M217 273.5 H222 L219.5 276 Z" fill="#000" stroke="#000" stroke-width="0.6"/>
 <!-- mouse -->
 <path d="M248.5 331 Q249 328.5 251.5 328.5 H252.5 V332.5 H255.5 V338 Q255 341 252 341 Q248.5 341 248.5 338 Z" fill="#d8d8d8" stroke="#000" stroke-width="1.2"/>
 <path d="M249 332.5 H252.5" stroke="#000" stroke-width="1"/>
 <path d="M254.5 330 V332" stroke="#000" stroke-width="1"/>
 <!-- xz -->
 <path d="M246.5 353 L252.5 358.5 M252.5 353 L246.5 358.5" stroke="#2030e0" stroke-width="1.5"/>
 <path d="M249.5 360 V366.5 H255" stroke="#ff0000" stroke-width="1.3" fill="none"/>
 <path d="M247.3 362.5 L249.5 359.5 L251.7 362.5 Z M254.5 364.3 L257 366.5 L254.5 368.7 Z" fill="#ff0000" stroke="#ff0000" stroke-width="0.6"/>
 <path d="M257.5 362.5 H262 L257.5 367.5 H262.5" stroke="#2030e0" stroke-width="1.4" fill="none"/>
 </g>
</svg>
<svg class="a" style="left:0;top:0" width="290" height="909" shape-rendering="auto">
 <defs>
  <radialGradient id="cg1" cx="0.5" cy="0.4" r="0.6"><stop offset="0" stop-color="#ffffff"/><stop offset="1" stop-color="#cfe4fa"/></radialGradient>
  <radialGradient id="cg2" cx="0.5" cy="0.4" r="0.6"><stop offset="0" stop-color="#fafafa"/><stop offset="1" stop-color="#d6d6d6"/></radialGradient>
 </defs>
 <circle cx="38.5" cy="486.5" r="10.6" fill="url(#cg1)" stroke="#8db2e0" stroke-width="1.8"/>
 <path d="M34.5 480.5 H40 L43.5 484 V492.5 H34.5 Z" fill="#fffbe8"/>
 <path d="M37 480.5 H40 L43.5 484 V488 M40 480.5 V484 H43.5 M34.5 484 V488 M37 492.5 H40" fill="none" stroke="#000" stroke-width="1"/>
 <rect x="33" y="479.5" width="2.5" height="2.5" fill="#e00000"/><rect x="33" y="491" width="2.5" height="2.5" fill="#e00000"/><rect x="42" y="491" width="2.5" height="2.5" fill="#e00000"/>
 <circle cx="70.5" cy="486.5" r="10.6" fill="url(#cg1)" stroke="#8db2e0" stroke-width="1.8"/>
 <path d="M66.5 480.5 H72 L75.5 484 V491.5 H66.5 Z" fill="#fffbe8"/>
 <path d="M69 480.5 H72 L75.5 484 V490 M72 480.5 V484 H75.5 M66.5 484 V489" fill="none" stroke="#000" stroke-width="1"/>
 <rect x="65" y="479.5" width="2.5" height="2.5" fill="#e00000"/><rect x="65" y="491" width="11" height="2" fill="#e00000"/>
 <!-- planes -->
 <rect x="95.5" y="477.5" width="14.5" height="16" fill="#ff8000" stroke="#905000" stroke-width="0.9"/>
 <path d="M91 489.5 L96.5 481 H114 L108.5 489.5 Z" fill="#d4d4d4" stroke="#666" stroke-width="0.9"/>
 <path d="M98.5 482 L105 475 L107 486.5 L100.5 497.5 Z" fill="#ffff20" stroke="#909000" stroke-width="0.8"/>
 <path d="M99.2 489.5 H107.6" stroke="#666" stroke-width="0.8"/>
 <!-- trash -->
 <circle cx="134.5" cy="486.5" r="10.6" fill="url(#cg2)" stroke="#a8a8a8" stroke-width="1.8"/>
 <path d="M128.5 482 Q134.5 478 140.5 481 L140 484 Q134.5 482 129 485 Z" fill="#e8e8e8" stroke="#555" stroke-width="0.8"/>
 <path d="M129 485 L131 494 Q134 495 137.5 493.5 L139.5 484 Q134 482 129 485 Z" fill="#888" stroke="#444" stroke-width="0.8"/>
 <path d="M132 486 L133 493 M135 485.5 L135.3 493.5 M137.5 485.5 L136.8 493" stroke="#ccc" stroke-width="0.7"/>
 <!-- ab.. -->
 <circle cx="166.5" cy="486.5" r="10.6" fill="url(#cg2)" stroke="#a8a8a8" stroke-width="1.8"/>
 <text x="158.3" y="490" font-family="Liberation Sans" font-size="11" letter-spacing="-0.9" fill="#000">ab..</text>
 <!-- tree -->
 <rect x="26.5" y="523.5" width="8" height="8" fill="#fff" stroke="#8a8a8a" stroke-width="1"/>
 <path d="M28 527.5 H33" stroke="#000" stroke-width="1.2"/>
 <path d="M36 527.5 H41" stroke="#999" stroke-width="1" stroke-dasharray="1 1"/>
 <path d="M49.5 537 V545.5 H58" stroke="#999" stroke-width="1" stroke-dasharray="1 1" fill="none"/>
 <!-- check -->
 <path d="M189 545 L193 542.5 L195.5 546.5 L200.5 538.5 L202 540 L196 551 L194 551 Z" fill="#6cbb10" stroke="#3f7f00" stroke-width="0.9" stroke-linejoin="round"/>
 <!-- bulbs -->
 <g id="bulb">
 <path d="M241.5 530 Q241.5 527 240 525.5 Q238.5 523.5 239.5 521.5 Q241 519 244.5 519 Q248 519 249.5 521.5 Q250.5 523.5 249 525.5 Q247.5 527 247.5 530 Z" fill="#fff060" stroke="#d8a000" stroke-width="1"/>
 <path d="M242 522 Q244.5 520.5 246 522" stroke="#fffff0" stroke-width="1.2" fill="none"/>
 <path d="M241.5 530 H247.5 V533 Q246.5 535 244.5 535 Q242.5 535 241.5 533 Z" fill="#3d8de0" stroke="#2060b0" stroke-width="0.8"/>
 </g>
 <use href="#bulb" transform="translate(0,18)"/>
</svg>
<div class="a" style="left:143px;top:809px;width:134px;height:1px;background:#a0a0a0"></div>

<!-- VIEWPORT CONTENT -->
<svg class="a" style="left:0;top:0" width="1035" height="909" shape-rendering="crispEdges">
 <g fill="#0000ff">
  <rect x="418" y="260" width="4" height="4"/><rect x="650" y="260" width="4" height="4"/><rect x="881" y="260" width="4" height="4"/>
  <rect x="418" y="455" width="4" height="4"/><rect x="881" y="455" width="4" height="4"/>
  <rect x="418" y="650" width="4" height="4"/><rect x="650" y="650" width="4" height="4"/><rect x="881" y="650" width="4" height="4"/>
 </g>
 <path d="M440.5 401.5 H520.5 A119 119 0 0 1 758.5 401.5 H862.5 V632.5 H701.5 V483.5 H608.5 V609.5 H440.5 Z" fill="none" stroke="#ff00ff" stroke-width="1" shape-rendering="auto"/>
 <g shape-rendering="auto">
 <path d="M646.5 452 L655.5 463 M655.5 452.5 L646.5 463.5" stroke="#ff0000" stroke-width="2.1"/>
 <!-- UCS triad -->
 <rect x="343" y="757" width="39" height="39" fill="#6f6f7e"/>
 <rect x="361" y="735" width="2" height="22" fill="#0a0a3c"/>
 <path d="M358 736 L362 718 L371 736 Z" fill="#0a0a3c"/>
 <rect x="382" y="776" width="21" height="2" fill="#0a0a3c"/>
 <path d="M403 768.5 L421 777 L403 784 Z" fill="#0a0a3c"/>
 <path d="M358 768.5 L372 776.5 L358 784 Z" fill="#0a0a3c"/>
 <path d="M363 767.5 H369 L363 772.5 H369" stroke="#0a0a3c" stroke-width="0.8" fill="none"/>
 <path d="M362.5 696 L366.5 701 L370.5 696 M366.5 701 V706" stroke="#0a0a3c" stroke-width="1" fill="none"/>
 <path d="M433 767.5 L441.5 776.5 M441.5 767.5 L433 776.5" stroke="#0a0a3c" stroke-width="1" fill="none"/>
 </g>
</svg>
<!-- STATUS BAR -->
<div class="a" style="left:3px;top:872px;width:375px;height:33px;background:#fff"></div>
<div class="a" style="left:382px;top:873px;width:36px;height:32px;background:#dae2ec;border:1px solid #3399ff"></div>
<div class="a" style="left:474px;top:872px;width:11px;height:33px;background:#f3f3f3;border:1px solid #ededed"></div>
<div class="a" style="left:705px;top:873px;width:12px;height:31px;background:#f3f3f3;border:1px solid #ededed"></div>
<div class="a" style="left:752px;top:873px;width:12px;height:31px;background:#f3f3f3;border:1px solid #ededed"></div>
<div class="a" style="left:802px;top:873px;width:12px;height:31px;background:#f3f3f3;border:1px solid #ededed"></div>
<div class="a" style="left:853px;top:873px;width:12px;height:31px;background:#f3f3f3;border:1px solid #ededed"></div>
<svg class="a" style="left:0;top:0" width="1035" height="909">
 <defs>
  <linearGradient id="bg1" x1="0" x2="1"><stop offset="0" stop-color="#7080d8"/><stop offset="1" stop-color="#c0c8f4"/></linearGradient>
 </defs>
 <!-- selection icon -->
 <path d="M396 879 H400 L401 880 V887 L397 886 Z" fill="url(#bg1)" stroke="#000" stroke-width="0.7"/>
 <path d="M396.5 878.5 H400.5 V886.5 H396.5 Z" fill="url(#bg1)"/>
 <path d="M401.5 881.5 H408 V889 H401.5 Z" fill="url(#bg1)"/>
 <path d="M400.5 887 H401.5 M402 889.3 H408.5 V882" stroke="#000" stroke-width="1" fill="none"/>
 <path d="M389.5 892 Q390.5 898 396 897.5 Q400 896.5 402 894 Q404.5 892 407.5 897.5" stroke="#ff00ff" stroke-width="1.4" fill="none"/>
 <path d="M390.5 893.5 Q391.5 899 396 898.5 Q400 897.5 402.5 895.5" stroke="#000" stroke-width="0.7" fill="none"/>
 <path d="M420 876.5 L422.5 878.7 L420 881 M424 876.5 L426.5 878.7 L424 881" stroke="#000" stroke-width="1.4" fill="none"/>
 <path d="M421 899 H426 L423.5 902 Z" fill="#000"/>
 <!-- keyboard -->
 <rect x="438.5" y="884.5" width="25.5" height="14" rx="2" fill="#f4f4f4" stroke="#555" stroke-width="1.1"/>
 <path d="M451 884.5 V882.5 Q455.5 882.5 456.5 880 V877" stroke="#555" stroke-width="1" fill="none"/>
 <g fill="#666"><rect x="441" y="887" width="2" height="2"/><rect x="444" y="887" width="2" height="2"/><rect x="447" y="887" width="2" height="2"/><rect x="450" y="887" width="2" height="2"/><rect x="453" y="887" width="2" height="2"/><rect x="456" y="887" width="2" height="2"/><rect x="459" y="887" width="2" height="2"/>
 <rect x="442" y="890.5" width="2" height="2"/><rect x="445" y="890.5" width="2" height="2"/><rect x="448" y="890.5" width="2" height="2"/><rect x="451" y="890.5" width="2" height="2"/><rect x="454" y="890.5" width="2" height="2"/><rect x="457" y="890.5" width="2" height="2"/><rect x="460" y="890.5" width="2" height="2"/>
 <rect x="441" y="894" width="2" height="2"/><rect x="444" y="894" width="2" height="2"/><rect x="447" y="894" width="10" height="2"/><rect x="458" y="894" width="2" height="2"/><rect x="461" y="894" width="1.5" height="2"/></g>
 <path d="M476 876.5 L478.5 878.7 L476 881 M480 876.5 L482.5 878.7 L480 881" stroke="#000" stroke-width="1.4" fill="none"/>
 <path d="M477 899 H482 L479.5 902 Z" fill="#000"/>
 <!-- zoom +- -->
 <path d="M500 893 L505 898 M502 892 L507 897" stroke="#bbb" stroke-width="0.8" stroke-dasharray="1 1"/>
 <path d="M506.5 890.5 L515 898.5" stroke="#444" stroke-width="2.6"/>
 <circle cx="502.5" cy="886.5" r="5.2" fill="#fffff0" stroke="#3c3ccc" stroke-width="1"/>
 <path d="M510 879.5 H517.5 M513.8 876 V883 M510 886.8 H517.5" stroke="#2050ff" stroke-width="1.3"/>
 <path d="M510 880.5 H517.5 M510 887.8 H517.5" stroke="#30e8ff" stroke-width="0.8"/>
 <!-- zoom window -->
 <path d="M530.5 879 H545.5 V884 M530.5 879 V891 H538" stroke="#3050ff" stroke-width="1.2" stroke-dasharray="1.6 1.2" fill="none"/>
 <path d="M529.5 879.5 H534.5 M532 877 V882" stroke="#3050ff" stroke-width="1.2"/>
 <path d="M541 894 L546 899 M543 893 L548 898" stroke="#bbb" stroke-width="0.8" stroke-dasharray="1 1"/>
 <path d="M548.5 892.5 L555 898.5" stroke="#444" stroke-width="2.6"/>
 <circle cx="544.8" cy="889.5" r="5" fill="#fffff0" stroke="#3c3ccc" stroke-width="1"/>
 <path d="M542 889.5 H547.6 M544.8 886.7 V892.3" stroke="#333" stroke-width="1"/>
 <!-- zoom extents -->
 <path d="M570 898.5 H588" stroke="#aaa" stroke-width="1" stroke-dasharray="1 1"/>
 <rect x="569.5" y="878.5" width="18.5" height="18" fill="#fffff0" stroke="#4040c0" stroke-width="1"/>
 <rect x="569.5" y="878.5" width="18.5" height="2.2" fill="#4040c0"/>
 <path d="M578.8 882 V895 M571 888.5 H586.5" stroke="#4050ff" stroke-width="1.3"/>
 <path d="M576.5 884.5 L578.8 882 L581 884.5 M576.5 892.5 L578.8 895 L581 892.5 M573.5 886 L571 888.5 L573.5 891 M584 886 L586.5 888.5 L584 891" stroke="#4050ff" stroke-width="1.3" fill="none"/>
 <!-- rotate -->
 <path d="M608.5 880 Q603.5 885 605 891.5 Q607.5 898.5 615.5 899 Q621.5 899 625 895" stroke="#4646f0" stroke-width="3" fill="none"/>
 <path d="M603.5 883 L610.5 876.3 L611.5 884.5 Z" fill="#4646f0"/>
 <path d="M607.2 886 Q607.5 895.5 615 897" stroke="#30e8ff" stroke-width="1" fill="none"/>
 <path d="M621 880.5 Q626.5 884 627 889.5" stroke="#4646f0" stroke-width="1" stroke-dasharray="1.5 1.2" fill="none"/>
 <circle cx="616.3" cy="889" r="4.7" fill="#84e4fa" stroke="#333" stroke-width="0.8" stroke-dasharray="1.2 1"/>
 <path d="M615.5 876 V884 M622 889 H628" stroke="#333" stroke-width="0.9" stroke-dasharray="1.2 1"/>
 <path d="M605 900.5 L612 893" stroke="#333" stroke-width="0.8"/>
 <path d="M614 887 V889.5" stroke="#333" stroke-width="0.8"/>
 <!-- pan -->
 <path d="M648 895 L657 886 M646 897 L655 888" stroke="#bbb" stroke-width="0.8" stroke-dasharray="1 1"/>
 <path d="M650.8 879.5 V895.5 M642 887.5 H659.5" stroke="#4050ff" stroke-width="1.5"/>
 <path d="M648 882.5 L650.8 879 L653.6 882.5 Z M648 892.5 L650.8 896 L653.6 892.5 Z M645 884.7 L641.5 887.5 L645 890.3 Z M656.5 884.7 L660 887.5 L656.5 890.3 Z" fill="#4050ff" stroke="#4050ff" stroke-width="0.6"/>
 <path d="M651.8 880.5 V895 M643 888.5 H659" stroke="#30e8ff" stroke-width="0.6"/>
 <!-- axis view -->
 <path d="M687.5 877 V887" stroke="#333" stroke-width="1"/>
 <path d="M677.5 896.5 L687.5 887 L697.5 896.5 Z" fill="#8ac8ff" stroke="#c8c000" stroke-width="1.2"/>
 <path d="M680 891 H695 M682 893.5 H693" stroke="#4060ff" stroke-width="1" stroke-dasharray="1 1"/>
 <path d="M679 897.5 L697 900" stroke="#bbb" stroke-width="1" stroke-dasharray="1 1.2"/>
 <path d="M679.3 883.5 L682.5 889 M682.5 883.5 L679.3 889 M693.8 883.5 L695.5 886.3 L697.3 883.5 M695.5 886.3 V889" stroke="#3040b0" stroke-width="0.9" fill="none"/>
 <path d="M707.8 887 H712.8 L710.3 889.8 Z" fill="#000"/>
 <!-- cubes -->
 <g stroke="#4848ff" stroke-width="1.3" fill="none">
  <path d="M725.5 879.5 H738.5 L745 886 V898 H731.5 L725.5 892 Z"/><path d="M725.5 879.5 L731.5 886 H745 M731.5 886 V898"/>
 </g>
 <path d="M738.5 880 V891.5 H726 M738.5 891.5 L744.5 897.5" stroke="#4848ff" stroke-width="0.9" stroke-dasharray="1 1.3" fill="none"/>
 <path d="M755.7 887 H760.7 L758.2 889.8 Z" fill="#000"/>
 <path d="M773.5 879.5 H786.5 L793 886 H779.5 Z" fill="#40f0ff"/>
 <g stroke="#4848ff" stroke-width="1.3" fill="none">
  <path d="M773.5 879.5 H786.5 L793 886 V898 H779.5 L773.5 892 Z"/><path d="M773.5 879.5 L779.5 886 H793 M779.5 886 V898"/>
 </g>
 <path d="M786.5 886.5 V891.5 H774 M786.5 891.5 L792.5 897.5" stroke="#4848ff" stroke-width="0.9" stroke-dasharray="1 1.3" fill="none"/>
 <path d="M803.7 887 H808.7 L806.2 889.8 Z" fill="#000"/>
 <!-- grey icons -->
 <path d="M829 886 L832.5 884.5 H839 L843.5 886 V892 L839 896.5 H832 L829 892 Z" fill="#d8d8d8"/>
 <path d="M825 883.5 L828 883 L834.5 891 L838.5 884.5 H845" stroke="#888" stroke-width="1.4" fill="none"/>
 <path d="M856 887 H861 L858.5 889.5 Z" fill="#999"/>
 <path d="M870 895.5 L887 878" stroke="#888" stroke-width="1.1"/>
 <path d="M876.5 885.5 H883 L885.5 888.5 V893.5 L883 896.5 H876.5 L874 893.5 V888.5 Z" fill="none" stroke="#888" stroke-width="1.4"/>
 <path d="M903 894.5 H920 M911 878 V894" stroke="#888" stroke-width="1.8"/>
 <path d="M912 887 H917.5 V893" stroke="#888" stroke-width="1.1" fill="none"/>
 <path d="M902 896.5 H920" stroke="#aaa" stroke-width="0.8"/>
 <path d="M935 895.5 L950 880.5" stroke="#888" stroke-width="1.1"/>
 <path d="M946.5 880.5 H950.5 V884.5" stroke="#888" stroke-width="1" fill="none"/>
 <path d="M947 878 L951 882 M951 878 L947 882 M950 877 V883 M947 880 H953 M934 893 L938 897 M938 893 L934 897 M936 892 V898 M933 895 H939" stroke="#bbb" stroke-width="0.8"/>
</svg>
<div class="a" style="left:966px;top:875.8px;font-family:'Liberation Sans',sans-serif;font-size:10px;line-height:10.1px;color:#000080;letter-spacing:0.05px;white-space:pre;transform:scaleX(1.19);transform-origin:0 0">X -23,155
Y -29,468
Z 0</div>
<!-- Tabs -->
<div class="a" style="left:61px;top:33px;width:54px;height:25px;background:#f1f1f1"></div>
<div class="t" style="left:74px;top:41px;color:#2b579a">Draw</div>
<div class="t" style="left:128px;top:41px;color:#fff">Modify</div>
<div class="t" style="left:193px;top:41px;color:#fff">CAM</div>
<div class="t" style="left:247px;top:41px;color:#fff">View</div>
<div class="t" style="left:299px;top:41px;color:#fff">Tools</div>
<div class="t" style="left:355px;top:41px;color:#fff">Help</div>

</body></html>
